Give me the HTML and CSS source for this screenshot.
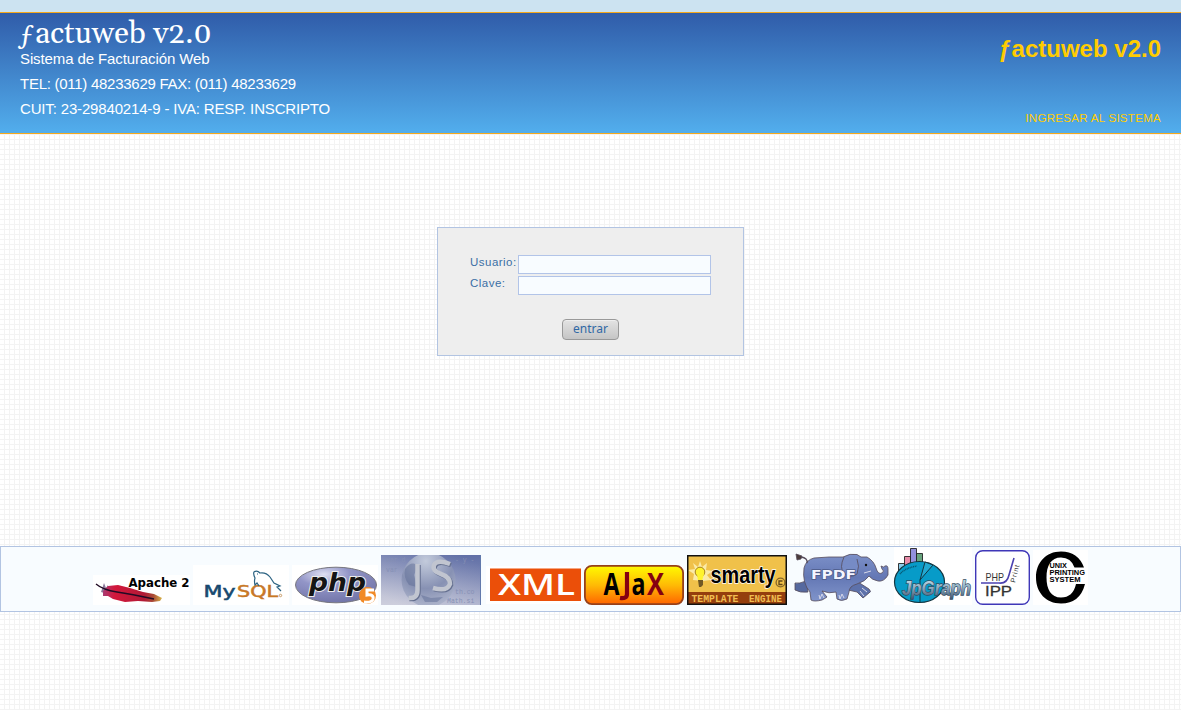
FILE: index.html
```html
<!DOCTYPE html>
<html lang="es">
<head>
<meta charset="utf-8">
<title>factuweb v2.0</title>
<link rel="stylesheet" href="styles.css">
</head>
<body>
<div class="topbar"></div>
<header class="header">
  <div class="company">
    <h1 class="title"><span class="florin">ƒ</span>actuweb v2.0</h1>
    <p class="tagline">Sistema de Facturación Web</p>
    <p class="phones">TEL: (011) 48233629 FAX: (011) 48233629</p>
    <p class="tax">CUIT: 23-29840214-9 - IVA: RESP. INSCRIPTO</p>
  </div>
  <div class="access">
    <h2 class="product">ƒactuweb v2.0</h2>
    <a class="login-link">INGRESAR AL SISTEMA</a>
  </div>
</header>
<main class="main">
  <form class="login">
    <div class="row"><label for="u">Usuario:</label><input id="u" type="text"></div>
    <div class="row"><label for="c">Clave:</label><input id="c" type="password"></div>
    <button class="enter" type="button">entrar</button>
  </form>
</main>
<footer class="footer">
<!-- Apache -->
<svg width="97" height="30" viewBox="93 575 97 30">
  <defs><linearGradient id="fe"><stop offset="0" stop-color="#a83b73"/><stop offset=".2" stop-color="#d3173b"/><stop offset=".7" stop-color="#b11a36"/><stop offset=".85" stop-color="#a84a35"/><stop offset="1" stop-color="#d9b64a"/></linearGradient></defs>
  <path fill="#fff" d="M93 575h97v30H93z"/>
  <path fill="#8c7999" d="M101 592l3-9 2 5 2-3v7l-4 1z"/>
  <path fill="url(#fe)" d="M103 591l5-5 10-1 12 3 13 4 11 2 8 4-2 3-8 1-14-1-13 1-12-3-5-3-5 0z"/>
  <path fill="none" stroke="#210b25" stroke-width="1.3" d="M96 584q7 6 21 8t37 7"/>
  <text class="dv b" x="128.500" y="587" font-size="12" textLength="61" lengthAdjust="spacingAndGlyphs">Apache 2</text>
</svg>
<!-- MySQL -->
<svg width="96" height="40" viewBox="193 565 96 40">
  <path fill="#fff" d="M193 565h96v40H193z"/>
  <g fill="none" stroke-width="2.200" stroke-linejoin="round"></g>
  <text class="dv" font-size="15" stroke-width=".5" stroke="#17496f" x="203.500" y="597" fill="#17496f" textLength="32" lengthAdjust="spacingAndGlyphs">My</text><text class="dv" font-size="15" stroke-width=".5" stroke="#c87825" x="237" y="597" fill="#c87825" textLength="41" lengthAdjust="spacingAndGlyphs">SQL</text>
  <circle cx="280.500" cy="595.500" r="1.200" fill="none" stroke="#c89b65"/>
  <path fill="none" stroke="#2b6282" stroke-width="1.200" d="M259 586l-2-3-2 2q-1-4 0-7-2-4-1-6 3-2 6 1 6-1 10 4l4 6 6 3-3 1 4 4M257 574h1"/>
</svg>
<!-- PHP 5 -->
<svg width="86" height="40" viewBox="292 565 86 40">
  <defs><radialGradient id="ph" cx=".35" cy=".2" r=".8"><stop offset="0" stop-color="#dedff2"/><stop offset=".4" stop-color="#9295c7"/><stop offset="1" stop-color="#7376aa"/></radialGradient></defs>
  <path fill="#fff" d="M292 565h86v40h-86z"/>
  <ellipse cx="336" cy="585" rx="40.500" ry="17.800" fill="url(#ph)" stroke="#77777f"/>
  <text class="dv b" x="309" y="590.500" font-size="25" font-style="italic" fill="#151515" stroke="#eee" stroke-width="2" paint-order="stroke" textLength="57" lengthAdjust="spacingAndGlyphs">php</text>
  <circle cx="367.500" cy="595.500" r="8.500" fill="#f18a26"/>
  <path fill="none" stroke="#fff" stroke-width="3" d="M374 590h-7v5q7-1 6 4-1 4-9 3"/>
</svg>
<!-- JavaScript -->
<svg width="100" height="50" viewBox="381 555 100 50">
  <defs><linearGradient id="jb" x1="0" y1=".8" x2=".8" y2="0"><stop offset="0" stop-color="#cbccdb"/><stop offset=".4" stop-color="#a5abc9"/><stop offset="1" stop-color="#6472a8"/></linearGradient><linearGradient id="jv" x2="0" y2="1"><stop offset="0" stop-color="#5e6da5" stop-opacity=".5"/><stop offset="1" stop-color="#d0d1de" stop-opacity=".45"/></linearGradient><radialGradient id="jg" cx=".45" cy=".15" r=".85"><stop offset="0" stop-color="#c3cbdc"/><stop offset=".6" stop-color="#8791b3"/><stop offset="1" stop-color="#adb4cb"/></radialGradient></defs>
  <path fill="url(#jb)" d="M381 555h100v50H381z"/><path fill="url(#jv)" d="M381 555h100v50H381z"/>
  <g class="mono" font-size="6.500" fill="#8690b5"><text x="386" y="562">var d</text><text x="455" y="562">- y -</text><text x="386" y="572">var</text><text x="455" y="594">th.co</text><text x="447" y="603">Math.si</text></g>
  <circle cx="428.500" cy="580" r="27" fill="url(#jg)"/>
  <path fill="#606d96" opacity=".5" d="M405 569q7-9 13-3l-4 9 3 12-8-2q-6-8-4-16zM421 595l10 3 12-1-6 5h-12z"/>
  <g fill="none" stroke-width="4.500"><path stroke="#657090" d="M418.500 565v26q0 9-9 8M451 565q-13-5-16 1-2 6 7 9t9 10q-3 8-17 4"/><path stroke="#c1c5d0" d="M417.500 564v26q0 9-9 8M450 564q-13-5-16 1-2 6 7 9t9 10q-3 8-17 4"/></g>
  <path fill="#6179ac" d="M480 555h1v50h-1z"/>
</svg>
<!-- XML -->
<svg width="97" height="40" viewBox="484 565 97 40">
  <path fill="#fff" d="M486 566h95v38h-95z"/><path fill="#eb4f09" d="M490 568.500h91V601h-91z"/>
  <text class="os sb" x="498" y="594.500" font-size="28" fill="#fff" textLength="77" lengthAdjust="spacingAndGlyphs">XML</text>
</svg>
<!-- Ajax -->
<svg width="100" height="40" viewBox="584 565 100 40">
  <defs><linearGradient id="aj" x2="0" y2="1"><stop offset="0" stop-color="#fffb00"/><stop offset=".5" stop-color="#ffbb05"/><stop offset="1" stop-color="#ff6500"/></linearGradient></defs>
  <rect x="584.900" y="565.900" width="98.200" height="38.200" rx="7" fill="url(#aj)" stroke="#96401a" stroke-width="1.800"/>
  <text class="os b" x="603.500" y="594.500" font-size="31" textLength="16" lengthAdjust="spacingAndGlyphs">A</text><path fill="none" stroke="#850011" stroke-width="4.200" d="M627 572v22q0 5-7 4"/><text class="os b" x="631.500" y="594.500" font-size="30" textLength="14" lengthAdjust="spacingAndGlyphs">a</text><text class="os b" x="647" y="594.500" font-size="31" fill="#850011" textLength="17" lengthAdjust="spacingAndGlyphs">X</text>
</svg>
<!-- Smarty -->
<svg width="100" height="50" viewBox="687 555 100 50">
  <path fill="#f0c14a" d="M687 555h100v50H687z"/><path fill="#943e0d" d="M687 592h100v13H687z"/>
  <path fill="#fbeaa6" d="M700 561l2 6 5-4-1 7 7 1-6 4 4 5-8 1-10-1 1-6-6-4 7-1-2-6 5 4z"/>
  <circle cx="700" cy="572" r="4.800" fill="#fff32e" stroke="#a7811d"/><path fill="#fff32e" d="M697 574h7l-2 7h-4z"/><path fill="#705824" d="M698 580h5v5l-2 2h-2z"/>
  <text class="lib b" x="710.500" y="582.500" font-size="24" stroke="#fff" stroke-width="1.500" paint-order="stroke" textLength="65" lengthAdjust="spacingAndGlyphs">smarty</text>
  <circle cx="780.500" cy="582.500" r="4.400" fill="none" stroke="#85672a" stroke-width="1.300"/><path fill="none" stroke="#624717" stroke-width="1.300" d="M782.500 581h-3.500v3.500h3.500"/>
  <text class="mono b" font-size="10.500" fill="#f0bd51" x="691.500" y="602" textLength="47" lengthAdjust="spacingAndGlyphs">TEMPLATE</text><text class="mono b" font-size="10.500" fill="#f0bd51" x="749" y="602" textLength="33" lengthAdjust="spacingAndGlyphs">ENGINE</text>
  <rect x="687.750" y="555.750" width="98.500" height="48.500" fill="none" stroke="#111" stroke-width="1.500"/>
</svg>
<!-- FPDF -->
<svg width="100" height="52" viewBox="790 553 100 52">
  <defs><linearGradient id="el" x2="0" y2="1"><stop offset="0" stop-color="#7c90c8"/><stop offset=".5" stop-color="#6478b5"/><stop offset="1" stop-color="#8094ca"/></linearGradient></defs>
  <g stroke="#554b5b" stroke-width=".8">
    <path fill="#56699f" d="M806 581Q799 584 795 583L795 590Q800 593 808 592z"/>
    <path fill="#5d71aa" d="M850 583L858 582L869 589Q872 592 869 593L863 598L857 592L848 590z"/>
    <path fill="url(#el)" d="M804 568Q806 560 814 558L829 557L843 557Q850 553 857 554.500L861 557L867 557Q874 561 876 568Q878 575 882 573Q885 571 882 569L881 566Q884 568 885 566Q888 565 888 569L888 575Q884 582 878 581Q872 580 869 576Q866 581 857 584Q849 586 849 592L847 599Q841 602 837 599L836 592Q829 594 822 591L827 597Q824 599 822 600Q814 602 811 600L810 592Q802 583 804 568z"/>
    <path fill="#768bc5" d="M844 557Q839 568 844 573Q850 579 857 574Q860 566 857 559"/>
    <path fill="#4b3c3b" d="M796 554L802 556L801 559L797 560z"/>
  </g>
  <path fill="none" stroke="#554b5b" stroke-width="1.300" d="M801 557Q808 558 807 563"/>
  <circle cx="866" cy="565" r="1.200" fill="#111"/>
  <path fill="none" stroke="#d5d7e9" d="M819 595l1 4 2-5 2 4M839 595l1 4 2-5 2 4M862 588l5 4M860 591l4 5M864 573l7-2"/>
  <text class="dv b" x="811" y="579" font-size="12" fill="#f4f5ff" stroke="#4c5b89" stroke-width="1.300" paint-order="stroke" textLength="45" lengthAdjust="spacingAndGlyphs">FPDF</text>
</svg>
<!-- JpGraph -->
<svg width="79" height="58" viewBox="893 547 79 58">
  <defs><linearGradient id="jp" x2="0" y2="1"><stop offset="0" stop-color="#d5f4fa"/><stop offset=".5" stop-color="#8fabc0"/><stop offset="1" stop-color="#3e5670"/></linearGradient></defs>
  <path fill="#fff" d="M894 547h78v58h-78z"/>
  <g stroke="#222" stroke-width=".9"><path fill="#8bcbea" d="M898.500 563.500h6v10h-6z"/><path fill="#e88ba8" d="M904.500 556.500h6v16h-6z"/><path fill="#9290dc" d="M910.500 548.500h6v22h-6z"/><path fill="#68a47e" d="M916.500 553.500h6v16h-6z"/></g>
  <ellipse cx="919.500" cy="582" rx="25" ry="20.500" fill="#079bc8" stroke="#123642" stroke-width="1.200"/>
  <path fill="#22a9d1" stroke="#123642" d="M920 580l5-18 8 3zM920 580l0 22"/>
  <path fill="none" stroke="#075873" stroke-width="1.600" stroke-dasharray="1 .7" d="M900 574q5-6 17-8"/>
  <text class="lib b" x="902" y="595" font-size="21" font-style="italic" fill="url(#jp)" stroke="#334b60" stroke-width="1.400" paint-order="stroke" textLength="69" lengthAdjust="spacingAndGlyphs">JpGraph</text>
</svg>
<!-- PHP Print IPP -->
<svg width="55" height="55" viewBox="975 550 55 55">
  <rect x="975.700" y="550.700" width="53.600" height="53.600" rx="7" fill="#fff" stroke="#3f37b8" stroke-width="1.400"/>
  <path fill="none" stroke="#4b42b0" stroke-width="1.600" d="M981 583h18q8 1 10-8l5-17"/>
  <text class="lib" fill="#333" x="985.500" y="580.500" font-size="11" textLength="18.500" lengthAdjust="spacingAndGlyphs">PHP</text><text class="lib" fill="#333" x="985" y="596" font-size="15" stroke="#333" stroke-width=".3" textLength="27" lengthAdjust="spacingAndGlyphs">IPP</text><text class="lib" fill="#333" font-size="7" transform="translate(1015 583) rotate(-76)" textLength="18">Print</text>
</svg>
<!-- CUPS -->
<svg width="55" height="55" viewBox="1033 550 55 55">
  <path fill="#fff" d="M1033 550h55v55h-55z"/>
  <path d="M1084 567.500Q1078 551.500 1061 551.500c-15 0-25 11-25 26s10 26 25 26q19 0 24-19.500h-9q-3 13.500-15 13.500c-10 0-14.500-8-14.500-20s4.500-20 14.500-20q10 0 13.500 10z"/>
  <text class="lib b" font-size="6.800" x="1049.500" y="567.800" textLength="17.500" lengthAdjust="spacingAndGlyphs">UNIX</text><text class="lib b" font-size="6.800" x="1049.500" y="575" textLength="35.500" lengthAdjust="spacingAndGlyphs">PRINTING</text><text class="lib b" font-size="6.800" x="1049.500" y="582" textLength="31" lengthAdjust="spacingAndGlyphs">SYSTEM</text>
</svg>
</footer>
</body>
</html>
```
FILE: styles.css
```css
* { box-sizing: border-box; }
body {
  margin: 0;
  min-height: 710px;
  font-family: "Liberation Sans", Arial, sans-serif;
  background-color: #fff;
  background-image:
    linear-gradient(to right, transparent 4px, #f3f3f3 4px),
    linear-gradient(to bottom, transparent 4px, #f3f3f3 4px);
  background-size: 5px 5px;
}
h1, h2, p { margin: 0; font-weight: normal; }
.topbar { height: 12px; background: #cce3f1; }
.header {
  display: flex;
  justify-content: space-between;
  height: 122px;
  padding: 0 20px;
  border-top: 1px solid #f5a81c;
  border-bottom: 1px solid #f5a81c;
  background: linear-gradient(#305ca9, #52aeed);
  color: #fff;
}
.company p { height: 25px; line-height: 25px; font-size: 15px; white-space: nowrap; }
.company .tagline { letter-spacing: -.11px; }
.company .phones { letter-spacing: -.27px; }
.company .tax { letter-spacing: -.16px; }
.title {
  height: 33px;
  line-height: 43px;
  font-family: Gelasio, Georgia, "DejaVu Serif", serif;
  font-size: 30.3px;
  white-space: nowrap;
}
.florin { margin-right: 1px; font-size: 27px; }
.access { display: flex; flex-direction: column; justify-content: space-between; align-items: flex-end; padding: 21px 0 8px; }
.product { font-size: 24px; line-height: 29px; font-weight: bold; color: #fc0; }
.login-link { font-size: 11.5px; line-height: 14px; color: #fc0; letter-spacing: .3px; }
.main { display: flex; justify-content: center; align-items: flex-start; height: 412px; padding-top: 93px; }
.login {
  display: flex;
  flex-direction: column;
  width: 307px;
  height: 129px;
  padding: 27px 32px 0;
  gap: 2px;
  border: 1px solid #b2c4e2;
  background: #eee;
}
.row { display: flex; height: 19px; }
.row label { width: 48px; font-size: 11.5px; line-height: 15px; color: #3b6ea5; letter-spacing: .48px; white-space: nowrap; }
.row input { width: 193px; height: 19px; padding: 0 3px; border: 1px solid #b2c4e8; background: #f8fcff; outline: none; }
.enter {
  align-self: center;
  width: 57px;
  height: 21px;
  margin-top: 22px;
  padding: 0 0 1px;
  border: 1px solid #999;
  border-radius: 4px;
  background: linear-gradient(#e3e3e3, #c5c5c5);
  box-shadow: inset 0 1px #eee;
  color: #3068a5;
  font: 12px/18px "Noto Sans", sans-serif;
}
.footer {
  display: flex;
  justify-content: center;
  align-items: flex-end;
  gap: 3px;
  height: 66px;
  padding-bottom: 6px;
  border: 1px solid #b2c4e2;
  background: #f8fcff;
}
.footer svg { flex: none; }
.dv { font-family: "DejaVu Sans", sans-serif; }
.lib { font-family: "Liberation Sans", sans-serif; }
.os { font-family: "Open Sans", sans-serif; }
.mono { font-family: "Liberation Mono", monospace; }
.sb { font-weight: 600; }
.b { font-weight: bold; }
```
